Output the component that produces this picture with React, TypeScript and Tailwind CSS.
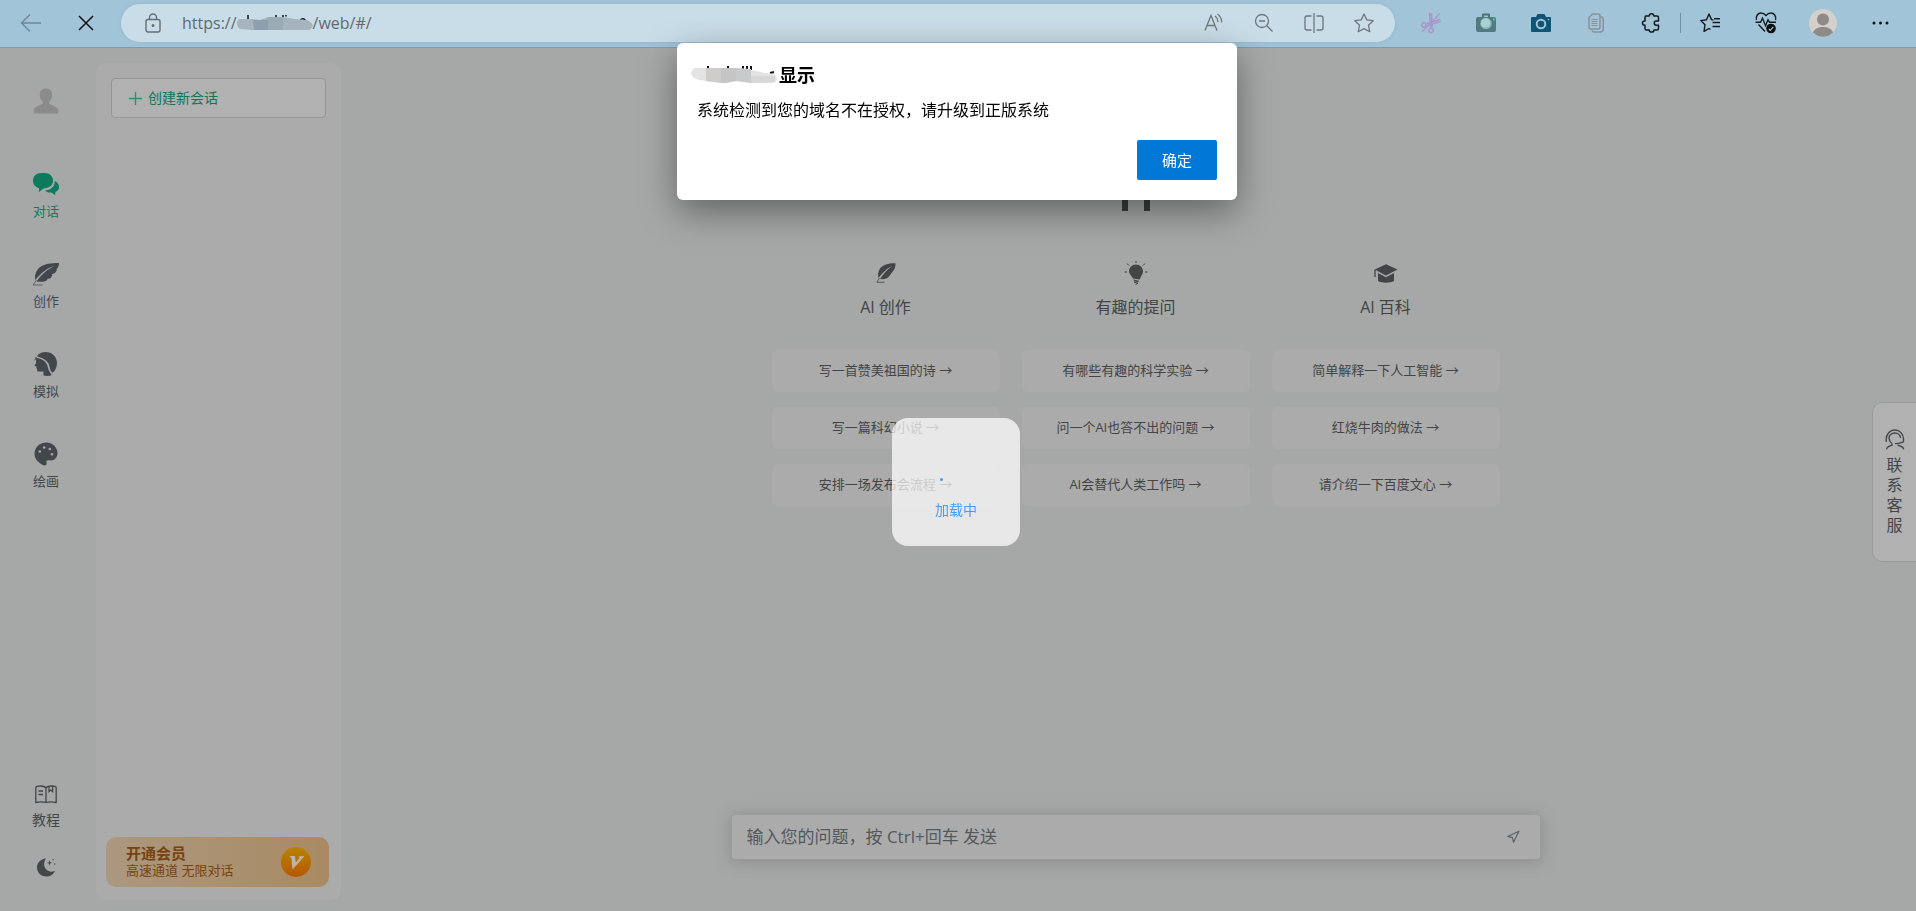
import React from 'react';
import { LuNavigation } from 'react-icons/lu';

interface IconProps {
  className?: string;
}

interface NavItem {
  label: string;
  icon: React.ReactNode;
  active?: boolean;
}

const BackIcon = () => (
  <svg width="22" height="20" viewBox="0 0 22 20" fill="none" stroke="#6e8797" strokeWidth="1.4">
    <path d="M10 1.5 1.5 10l8.500 8.500M1.500 10H21" />
  </svg>
);

const StopIcon = () => (
  <svg width="16" height="16" viewBox="0 0 16 16" fill="none" stroke="#111" strokeWidth="1.5">
    <path d="M1 1l14 14M15 1 1 15" />
  </svg>
);

const LockIcon = () => (
  <svg width="16" height="20" viewBox="0 0 16 20" fill="none" stroke="#696d70" strokeWidth="1.4">
    <rect x="1" y="6.500" width="14" height="12.500" rx="2" />
    <path d="M4.500 6.500V4.500a3.500 3.500 0 0 1 7 0v2" />
    <circle cx="8" cy="12.500" r="0.800" fill="#696d70" />
  </svg>
);

const ReadAloudIcon = () => (
  <svg width="20" height="20" viewBox="0 0 20 20" fill="none" stroke="#6f767b" strokeWidth="1.300">
    <path d="M1 17.500 7 2.500l6 15M3 12.500h8M11 3c2 1.300 2.800 3.500 2.800 6M13.500 1c2.800 2 4.200 4.700 4.200 8.500" />
  </svg>
);

const ZoomOutIcon = () => (
  <svg width="20" height="20" viewBox="0 0 20 20" fill="none" stroke="#6f767b" strokeWidth="1.300">
    <circle cx="8" cy="8" r="6.500" />
    <path d="M5 8h6M12.800 12.800 18.500 18.500" />
  </svg>
);

const SplitIcon = () => (
  <svg width="20" height="20" viewBox="0 0 20 20" fill="none" stroke="#6f767b" strokeWidth="1.300">
    <path d="M7.500 3H3a2 2 0 0 0-2 2v10a2 2 0 0 0 2 2h4.500M12.500 3H17a2 2 0 0 1 2 2v10a2 2 0 0 1-2 2h-4.500M10 0v20" />
  </svg>
);

const StarIcon = () => (
  <svg width="20" height="20" viewBox="0 0 20 20" fill="none" stroke="#6f767b" strokeWidth="1.300" strokeLinejoin="round">
    <path d="M10 1l2.800 5.900 6.400.8-4.700 4.500 1.200 6.500L10 15.600l-5.700 3.100 1.200-6.500L.8 7.700l6.400-.8z" />
  </svg>
);

const ScissorsIcon = () => (
  <svg width="22" height="22" viewBox="0 0 22 22" fill="none" stroke="#a997c8" strokeWidth="1.600">
    <path d="M9.500 1.500 10.500 15M11.500 1.500 12 15M19.500 7.500 6 12M20 9.500 6.500 14" strokeLinecap="round" />
    <circle cx="4" cy="13" r="2.200" />
    <circle cx="11" cy="18.500" r="2.200" />
    <path d="M20 1.500 2 20" strokeWidth="1.200" />
  </svg>
);

const CameraIcon = () => (
  <svg width="20" height="20" viewBox="0 0 20 20">
    <path d="M6 4V1.500Q6 .5 7 .5h6q1 0 1 1V4h-2V2.500H8V4z" fill="#4d6f76" />
    <rect x="0" y="4" width="20" height="15" rx="2" fill="#547a81" />
    <circle cx="10" cy="10.500" r="5.800" fill="#8cb6b8" />
    <circle cx="9.500" cy="10" r="4.600" fill="#a6d3d3" />
    <rect x="17" y="5.500" width="1.500" height="2" fill="#4ee0ae" />
  </svg>
);

const ShotIcon = () => (
  <svg width="20" height="18" viewBox="0 0 20 18">
    <path d="M1 3h4l1.500-3h7L15 3h4q1 0 1 1v13q0 1-1 1H1q-1 0-1-1V4q0-1 1-1z" fill="#0d5475" />
    <circle cx="10" cy="10" r="4.300" fill="none" stroke="#a2c4d9" strokeWidth="2" />
    <circle cx="17.500" cy="5.500" r="0.800" fill="#a2c4d9" />
  </svg>
);

const DocsIcon = () => (
  <svg width="16" height="20" viewBox="0 0 16 20" fill="none" stroke="#87929a" strokeWidth="1.500">
    <path d="M4.500 1H10a2 2 0 0 1 2 2v11a2 2 0 0 1-2 2H3a2 2 0 0 1-2-2V4.500zM13 4h.5a2 2 0 0 1 1.700 2v10a3 3 0 0 1-3 3H6a2 2 0 0 1-2-1.500" />
    <path d="M3.500 6.500h6M3.500 8.500h6M3.500 10.500h6M3.500 12.500h6" strokeWidth="1" />
  </svg>
);

const PuzzleIcon = () => (
  <svg width="20" height="20" viewBox="0 0 20 20" fill="none" stroke="#15191c" strokeWidth="1.500" strokeLinejoin="round">
    <path d="M5 3h3.200c0-3 4.600-3 4.600 0H16q1.500 0 1.500 1.500V8h-2.300c-2.600 0-2.600 4.200 0 4.200h2.300v3.300q0 1.500-1.500 1.500h-3c0 2.800-4.800 2.800-4.800 0H5.500Q4 17 4 15.500v-3.300c-3.400 0-3.400-4.200 0-4.200V4.500Q4 3 5 3z" />
  </svg>
);

const FavoritesIcon = () => (
  <svg width="21" height="20" viewBox="0 0 21 20" fill="none" stroke="#15191c" strokeWidth="1.400" strokeLinejoin="round">
    <path d="M13.500 7 11.500 6.600 9 1 6.500 6.700.8 7.600l4.200 4.200L4 18.300l5-2.800 1.500 1" />
    <path d="M12.500 9.500H20M14 5.800h6M12.500 13.500H20" />
  </svg>
);

const HealthIcon = () => (
  <svg width="22" height="22" viewBox="0 0 22 22" fill="none" stroke="#15191c" strokeWidth="1.400">
    <path d="M1.500 8C.5 4 3 1 6 1c2.200 0 3.700 1 5 2.500C12.300 2 13.800 1 16 1c3 0 5.500 3 4.500 7" />
    <path d="M.5 10.200h5l2-4 3 7.500 2.500-6 1.500 2.500h6.500M3.500 12.500 10 19.500" />
    <circle cx="16" cy="16.500" r="4.800" fill="#0b0d0e" stroke="none" />
    <path d="M13.800 16.800l1.500 1.500 3-3.500" stroke="#a2c4d9" strokeWidth="1.200" />
  </svg>
);

const UserPhoto = () => (
  <svg width="28" height="28" viewBox="0 0 28 28">
    <circle cx="14" cy="14" r="14" fill="#d3cfcb" />
    <circle cx="14" cy="10.500" r="6" fill="#8e8a87" />
    <path d="M4 23.500c2-7.500 18-7.500 20 0a14 14 0 0 1-20 0z" fill="#8e8a87" />
  </svg>
);

const DotsIcon = () => (
  <svg width="17" height="4" viewBox="0 0 17 4" fill="#101315">
    <circle cx="2" cy="2" r="1.500" />
    <circle cx="8.500" cy="2" r="1.500" />
    <circle cx="15" cy="2" r="1.500" />
  </svg>
);

const PersonIcon = () => (
  <svg width="26" height="26" viewBox="0 0 26 26" fill="#8a8b8a">
    <path d="M13 .5c3.700 0 6.200 2.500 6.200 6 0 3.200-1.400 5.500-2.900 7v2.200c4 1.700 8.200 3.300 8.900 6.100v2.700q0 1-1 1H1.800q-1 0-1-1v-2.700c.7-2.800 4.900-4.400 8.900-6.100v-2.200c-1.500-1.500-2.900-3.800-2.900-7 0-3.500 2.500-6 6.200-6z" />
  </svg>
);

const ChatIcon = () => (
  <svg width="26" height="22" viewBox="0 0 26 22" fill="currentColor">
    <path d="M8.500 0h3c5 0 8.500 3 8.500 7.500S17 15 11 15.200L6 19v-4C2.500 14.300 0 11.500 0 7.500 0 3 3.500 0 8.500 0z" />
    <path d="M21.700 8c2.800 1 4.300 3.500 4.300 6 0 2-1 3.800-3.500 4.800L22 22l-3.700-2.500c-3 .2-5-.5-6.300-2 5.500-.4 10-3.500 9.700-9.500z" />
  </svg>
);

const FeatherIcon = ({ className }: IconProps) => (
  <svg className={className} viewBox="0 0 26 23" fill="currentColor">
    <path d="M26 0C18-.2 9 1 5 6 2.500 9 1.500 13 2.200 17 8 10 14 5 21.500 3 14 6.500 8.500 11.500 3.500 18.500c4 .6 8 .4 11-1.500l-.5-1 3.500-.7 2-3.300-1-.5 3.500-1.500 2-3-.7-.6C25 5 26 3 26 0z" />
    <path d="M3.500 17 0 22h9.500" fill="none" stroke="currentColor" strokeWidth="0.700" />
  </svg>
);

const QuillIcon = () => (
  <svg width="20" height="20" viewBox="0 0 20 20" fill="currentColor">
    <path d="M19.500.2C13 0 7 1.500 4 5.500c-2 2.800-2.300 6-1.500 9.500C6 10 10.500 5.500 16 3.200 11.500 6.500 7.500 10.500 4 16c4 .5 7-.2 9-2.500l2.500-3.500 2-2.500C19 5.500 19.500 3 19.500.2z" />
    <path d="M3.500 15 .8 19.300h7.700" fill="none" stroke="currentColor" strokeWidth="0.800" />
  </svg>
);

const HeadIcon = () => (
  <svg width="24" height="24" viewBox="0 0 24 24" fill="currentColor">
    <path d="M2.800 4.200C5 1.300 8 0 11.500 0 18 0 23 4.800 23 11c0 4.300-1.800 7.700-4.500 9.700-2.700-2-2.500-5.500-3.600-8.200C13.300 8.300 9 5.800 2.800 4.200z" />
    <path d="M2.200 5.700c5.500 1 9.600 3.500 11 7.300 1.100 3 1.100 6 3.300 8l1.200 2.300C15 24.200 12 24 9.500 23.500V19.500H4.700c-1.700 0-1.700-1-1.500-2.300L2.400 16v-1.500L.5 13.700l1.500-2.500z" />
    <path d="M.8 8.200 2.300 5" stroke="currentColor" fill="none" />
  </svg>
);

const PaletteIcon = () => (
  <svg width="24" height="24" viewBox="0 0 24 24">
    <path
      d="M12 .5c6.500 0 11.500 4.800 11.500 10.500 0 4.500-3 7.500-6.500 7.500-2 0-4-.6-4.500.5-.6 1.500.8 2.500-.5 4-1.500 1.200-4-.2-6-1.700C2.500 19 .5 15.500.5 12 .5 5.500 5.500.5 12 .5z"
      fill="currentColor"
    />
    <g fill="#a4a7a6">
      <circle cx="5.800" cy="9.500" r="1.300" />
      <circle cx="10.200" cy="5.500" r="1.300" />
      <circle cx="15.800" cy="7" r="1.300" />
      <circle cx="18" cy="12.200" r="1.300" />
    </g>
  </svg>
);

const BookIcon = () => (
  <svg width="22" height="19" viewBox="0 0 22 19" fill="none" stroke="currentColor" strokeWidth="1.300">
    <path d="M11 17.500V3C9.500.8 7.500 1 5 1 2.500 1 .8 1.500.8 3v14.500c3.500-.8 7-1 10.200 0 3.200-1 6.700-.8 10.200 0V3c0-1.500-1.700-2-4.200-2s-4.500-.2-6 2" />
    <path d="M3.500 6h4.500M3.500 9.500h4.500M14 1v5.500l1.800-1.500 1.800 1.500V1" />
  </svg>
);

const MoonIcon = () => (
  <svg width="19" height="19" viewBox="0 0 19 19" fill="currentColor">
    <path d="M9 .3C3.500 1.200 0 5 0 9.500c0 5 4 9 9.500 9 4 0 7-2 8.500-5.800C11 16.500 3.500 8.500 9 .3z" />
    <path d="M12.500 2.200l.7 2 2 .7-2 .7-.7 2-.7-2-2-.7 2-.7z" />
    <circle cx="16" cy="1.800" r="0.700" />
    <circle cx="17.700" cy="6" r="0.700" />
  </svg>
);

const BulbIcon = () => (
  <svg width="24" height="24" viewBox="0 0 24 24" fill="currentColor">
    <path d="M12 3.500c4 0 7 3 7 6.800 0 3.400-2.300 4.700-3.200 8.200l-7-1C8 14.500 5 13.500 5 10.300c0-3.800 3-6.800 7-6.800z" />
    <path
      d="M12 0v2M3 2.500l2 2M21 2.500l-2 2M.5 11h2.500M21 11h2.500M9.500 19l5 1.200-4.500 1 4 1-2.500 1.300"
      fill="none"
      stroke="currentColor"
    />
  </svg>
);

const CapIcon = () => (
  <svg width="24" height="19" viewBox="0 0 24 19" fill="currentColor">
    <path d="M12 .3 23.500 5.500 12 11.500.8 5.500z" />
    <path d="M4 9l8 4.200L20 9v8c-4 2.300-12 2.300-16 0z" />
    <path d="M1 5.500V13" stroke="currentColor" strokeWidth="1.300" />
  </svg>
);

const VipIcon = () => (
  <svg width="30" height="30" viewBox="0 0 30 30">
    <defs>
      <linearGradient id="vip" x1="0" y1="0" x2="0" y2="1">
        <stop offset="0" stopColor="#b98300" />
        <stop offset="1" stopColor="#b55800" />
      </linearGradient>
    </defs>
    <circle cx="15" cy="15" r="15" fill="url(#vip)" />
    <path d="M8.500 9h5.500l.8 6.500L18.500 11l-1-1.500L23.500 9 11.500 22.500l-1-11z" fill="#bdb5a8" />
  </svg>
);

const ServiceIcon = () => (
  <svg width="20" height="21" viewBox="0 0 20 21" fill="none" stroke="currentColor" strokeWidth="1.400">
    <path d="M1.200 13v-2.500C1.200 5 4.800 1 9.800 1s8.700 4 8.700 9v3" />
    <path d="M6.800 14.500C4.500 12.500 4 10.500 4 9c0-2.800 2.500-5 5.800-5s5.700 2.200 5.700 5" />
    <path d="M18.500 13c-2 0-3 1.800-8.500 1.600M7 14.500v1.800C4.500 17 2 17.500 1.500 20.300M12.500 16.300c3.500.7 5.800 1.500 6.200 4" />
  </svg>
);

// grey smear over the host name, letter tops stick out of it
const UrlSmear = () => (
  <svg className="shrink-0" width="76" height="20" viewBox="0 0 76 20">
    <path d="M11 2v4M39 2v3M46 2v3M49 2v1.500M63 8c1-3 5-3 5 0" stroke="#111" strokeWidth="1.500" fill="none" />
    <path d="M4 6h11l8 1 8-3h15l12 2 12 1q5 2 6 6l-3 4H16L3 16Q0 14 0 10t4-4z" fill="#a5b4bd" />
    <path d="M16 7h15v10H17z" fill="#8e9fad" />
    <path d="M31 4h15v13H31z" fill="#9aabb6" />
  </svg>
);

const HostSmear = () => (
  <svg className="shrink-0" width="86" height="20" viewBox="0 0 86 20">
    <path d="M17 1v3M37 1v3M52 1v3M56 1v4M60 1v4M79 8l4-1" stroke="#111" strokeWidth="2" fill="none" />
    <path d="M4 3h41l15 2 14 3 9 1q3 3 3 6-2 3-7 3H60l-15-2-15 2-15-2Q2 15 0 9q1-5 4-6z" fill="#e3e3e3" />
    <path d="M15 3h15v15l-15-2z" fill="#d0cccc" />
    <path d="M30 3h15v13l-10 2h-5z" fill="#c6c5c6" />
    <path d="M45 3l15 1v14l-15-2z" fill="#c9cacc" />
    <path d="M60 11h24v6l-24 1z" fill="#d8d7d8" />
  </svg>
);

const pillIcons = [
  { label: '大声朗读', icon: <ReadAloudIcon /> },
  { label: '缩小', icon: <ZoomOutIcon /> },
  { label: '拆分窗口', icon: <SplitIcon /> },
  { label: '收藏', icon: <StarIcon /> },
];

const extensions = [
  { label: '剪刀', icon: <ScissorsIcon /> },
  { label: '相机', icon: <CameraIcon /> },
  { label: '截图', icon: <ShotIcon /> },
  { label: '文档', icon: <DocsIcon /> },
  { label: '扩展', icon: <PuzzleIcon /> },
];

const navItems: NavItem[] = [
  { label: '对话', icon: <ChatIcon />, active: true },
  { label: '创作', icon: <FeatherIcon className="w-[26px] h-[23px]" /> },
  { label: '模拟', icon: <HeadIcon /> },
  { label: '绘画', icon: <PaletteIcon /> },
];

const topics = [
  {
    title: 'AI 创作',
    icon: <QuillIcon />,
    prompts: ['写一首赞美祖国的诗', '写一篇科幻小说', '安排一场发布会流程'],
  },
  {
    title: '有趣的提问',
    icon: <BulbIcon />,
    prompts: ['有哪些有趣的科学实验', '问一个AI也答不出的问题', 'AI会替代人类工作吗'],
  },
  {
    title: 'AI 百科',
    icon: <CapIcon />,
    prompts: ['简单解释一下人工智能', '红烧牛肉的做法', '请介绍一下百度文心'],
  },
];

const BrowserBar = () => (
  <header className="h-12 flex items-center bg-[#a2c4d9] border-b border-[#7d9bb0] pl-[3px] pr-2 pb-[2px]">
    <button className="w-[55px] flex justify-center" aria-label="后退">
      <BackIcon />
    </button>
    <button className="w-[55px] flex justify-center" aria-label="停止">
      <StopIcon />
    </button>
    <div className="flex-1 h-[38px] ml-2 mr-2 rounded-full bg-[#c9dde8] shadow-[0_0_4px_#93b5ca] flex items-center pl-6 pr-[6px]">
      <LockIcon />
      <div className="flex-1 flex items-center ml-[21px] text-base leading-5 text-[#63686c]">
        <span>https://</span>
        <UrlSmear />
        <span>/web/#/</span>
      </div>
      {pillIcons.map((item) => (
        <button className="w-[50px] flex justify-center" key={item.label} aria-label={item.label}>
          {item.icon}
        </button>
      ))}
    </div>
    {extensions.map((item) => (
      <button className="w-[55px] flex justify-center" key={item.label} aria-label={item.label}>
        {item.icon}
      </button>
    ))}
    <div className="w-px h-5 mx-[2px] bg-[#7391a3]" />
    <button className="w-[55px] flex justify-center" aria-label="收藏夹">
      <FavoritesIcon />
    </button>
    <button className="w-[55px] flex justify-center" aria-label="浏览器概要">
      <HealthIcon />
    </button>
    <button className="w-[60px] flex justify-center" aria-label="个人资料">
      <UserPhoto />
    </button>
    <button className="w-[55px] flex justify-center" aria-label="更多">
      <DotsIcon />
    </button>
  </header>
);

const SideNav = () => (
  <nav className="w-[92px] flex flex-col items-center pt-10 pb-[34px] text-[#42474b] text-[13px] leading-5">
    <PersonIcon />
    <div className="mt-[58px] flex flex-col gap-[41px]">
      {navItems.map((item) => (
        <a
          href="#"
          key={item.label}
          className={item.active ? 'flex flex-col items-center gap-[5px] text-[#0c7a5c]' : 'flex flex-col items-center gap-[5px]'}
        >
          <span className="h-6 flex items-center">{item.icon}</span>
          <span>{item.label}</span>
        </a>
      ))}
    </div>
    <a href="#" className="mt-auto flex flex-col items-center gap-[6px] text-sm leading-5">
      <BookIcon />
      <span>教程</span>
    </a>
    <button className="mt-7" aria-label="夜间模式">
      <MoonIcon />
    </button>
  </nav>
);

const SessionPanel = () => (
  <aside className="w-[245px] ml-1 mt-[15px] mb-[11px] rounded-[10px] bg-[#ababab] flex flex-col">
    <button className="h-10 m-[15px] px-4 flex items-center gap-[5px] rounded border border-[#959595] bg-[#b1b1b1] text-sm text-[#0f7659]">
      <svg width="15" height="15" viewBox="0 0 15 15" stroke="#3f8a73" strokeWidth="1.400">
        <path d="M7.500 1v13M1 7.500h13" />
      </svg>
      创建新会话
    </button>
    <a
      href="#"
      className="mt-auto mb-[13px] ml-[10px] mr-3 h-[50px] pl-5 pr-[18px] rounded-[10px] flex items-center justify-between bg-linear-to-r from-[#ab9880] to-[#a98a62] text-[#78430f]"
    >
      <span className="flex flex-col pb-[2px]">
        <b className="text-[15px] leading-[18px]">开通会员</b>
        <span className="text-[13px] leading-4">高速通道 无限对话</span>
      </span>
      <VipIcon />
    </a>
  </aside>
);

const Main = () => (
  <main className="flex-1 ml-[14px] flex flex-col items-center pt-[151px] pb-[51px]">
    <div className="h-3 flex gap-4">
      <i className="w-[6px] bg-[#3b3c3d]" />
      <i className="w-[6px] bg-[#3b3c3d]" />
    </div>
    <div className="w-full max-w-[728px] mt-[50px] grid grid-cols-3 gap-[22px] text-[#434445]">
      {topics.map((topic) => (
        <section className="flex flex-col" key={topic.title}>
          <div className="h-6 flex items-center justify-center">{topic.icon}</div>
          <h2 className="mt-[10px] mb-[31px] text-base leading-6 text-center">{topic.title}</h2>
          <ul className="flex flex-col gap-[15px]">
            {topic.prompts.map((prompt) => (
              <li key={prompt}>
                <button className="w-full h-[42px] rounded-md bg-[#ababab] text-[13px]">{prompt} →</button>
              </li>
            ))}
          </ul>
        </section>
      ))}
    </div>
    <form className="w-full max-w-[810px] h-[46px] mt-auto pl-[15px] pr-5 flex items-center rounded border border-[#9a9b9d] bg-[#ababab] shadow-[0_2px_16px_rgba(90,90,90,0.35)]">
      <input
        type="text"
        aria-label="问题"
        placeholder="输入您的问题，按 Ctrl+回车 发送"
        className="flex-1 bg-transparent outline-none text-[17px] placeholder:text-[#54585c]"
      />
      <button type="button" aria-label="发送" className="text-[#5d6063]">
        <LuNavigation size={14} />
      </button>
    </form>
  </main>
);

const ServiceTab = () => (
  <a
    href="#"
    className="fixed right-0 top-[402px] w-11 h-[160px] pt-[26px] flex flex-col items-center rounded-l-[10px] border border-r-0 border-[#999b9b] bg-[#b1b1b1] text-[#42464a] text-base leading-5"
  >
    <ServiceIcon />
    <span className="w-4 mt-[5px]">联系客服</span>
  </a>
);

const Loading = () => (
  <div className="fixed inset-x-0 top-[418px] pr-1 flex justify-center">
    <div className="w-32 h-32 rounded-2xl bg-white/72 flex flex-col items-center pt-[60px] text-[#409eff] text-sm leading-5">
      <i className="w-[3px] h-[3px] mr-[30px] mb-[19px] rounded-full bg-[#409eff]" />
      加载中
    </div>
  </div>
);

const AlertDialog = () => (
  <div className="fixed inset-x-0 top-[43px] pr-[2px] flex justify-center">
    <div
      role="alertdialog"
      aria-labelledby="alert-title"
      className="w-[560px] rounded-md bg-white px-5 pb-5 text-black shadow-[0_12px_36px_rgba(0,0,0,0.4)]"
    >
      <h1 id="alert-title" className="-ml-[6px] pt-5 flex items-center gap-[2px] text-lg leading-6 font-bold">
        <HostSmear />
        显示
      </h1>
      <p className="mt-[11px] text-base leading-6">系统检测到您的域名不在授权，请升级到正版系统</p>
      <div className="mt-[18px] flex justify-end">
        <button className="w-20 h-10 rounded-xs bg-[#0078d7] text-white text-[15px]">确定</button>
      </div>
    </div>
  </div>
);

const App = () => {
  return (
    <div className="min-h-screen flex flex-col bg-[#a5a8a7] font-['Open_Sans','Noto_Sans_CJK_SC',sans-serif]">
      <BrowserBar />
      <div className="flex-1 flex">
        <SideNav />
        <SessionPanel />
        <Main />
      </div>
      <ServiceTab />
      <Loading />
      <AlertDialog />
    </div>
  );
};

export default App;
